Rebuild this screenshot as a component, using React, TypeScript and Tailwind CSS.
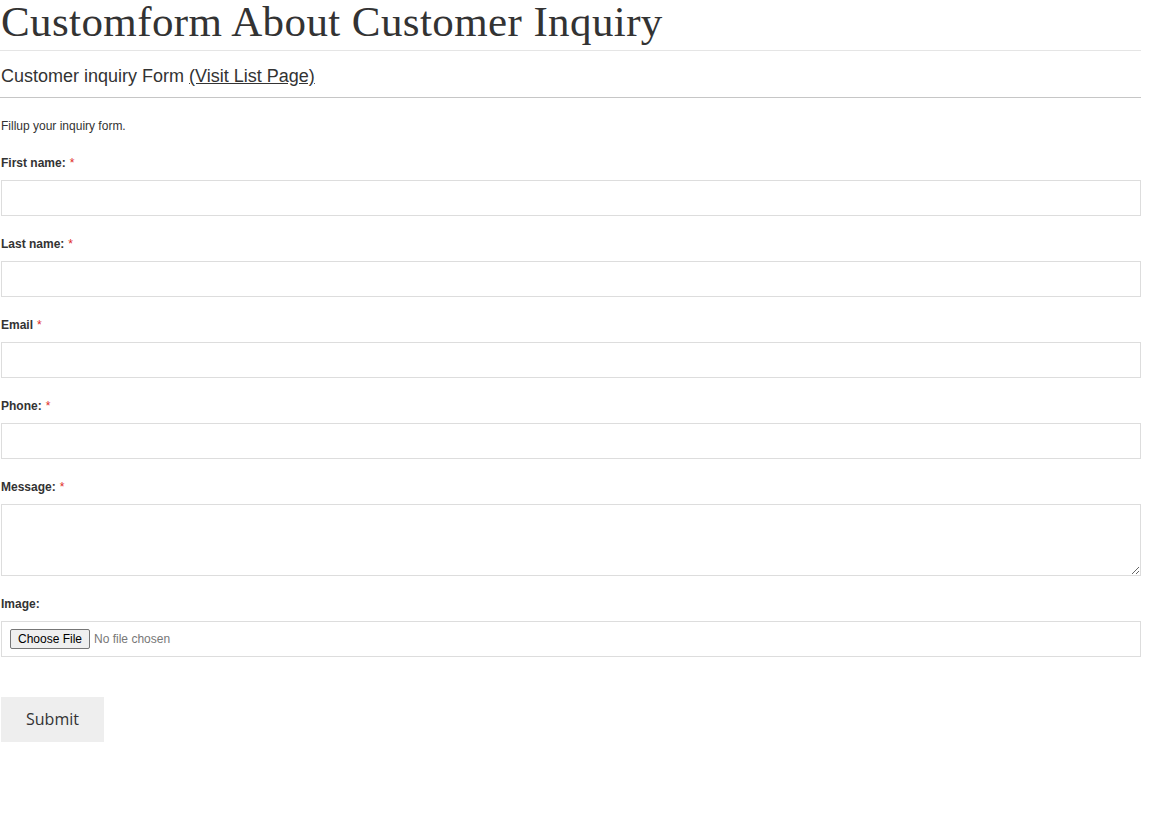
import React from 'react';

const Field: React.FC<{ label: string; required?: boolean; children: React.ReactNode }> = ({ label, required, children }) => (
  <div className="flex flex-col">
    <label className="h-[18px] text-[12px] leading-[18px] font-bold text-[#333]">
      {label}
      {required && <span className="ml-1 text-[#e02b27] font-normal">*</span>}
    </label>
    <div className="mt-[8px]">{children}</div>
  </div>
);

const inputCls = 'block w-full h-[36px] border border-[#dddddd] bg-white px-2 text-[14px] outline-none';

export default function App() {
  return (
    <div className="w-[1141px] bg-white text-[#333] font-['Liberation_Sans',Arial,sans-serif]">
      <h1 className="pl-px h-[51px] text-[43px] leading-[44px] font-normal font-['Liberation_Serif',Georgia,serif] text-[#333] border-b border-[#e5e5e5] tracking-[0.4px]">
        Customform About Customer Inquiry
      </h1>
      <div className="pl-px h-[47px] pt-[13px] text-[18px] leading-[24px] border-b border-[#c6c6c6]">
        Customer inquiry Form{' '}
        <a href="#" className="underline text-[#333]">(Visit List Page)</a>
      </div>
      <div className="pl-px pt-[19px]">
        <p className="text-[12px] leading-[18px]">Fillup your inquiry form.</p>
        <div className="mt-[19px] flex flex-col gap-[19px]">
          <Field label="First name:" required><input className={inputCls} /></Field>
          <Field label="Last name:" required><input className={inputCls} /></Field>
          <Field label="Email" required><input className={inputCls} /></Field>
          <Field label="Phone:" required><input className={inputCls} /></Field>
          <Field label="Message:" required>
            <textarea className="block w-full h-[72px] border border-[#dddddd] bg-white px-2 text-[14px] outline-none" />
          </Field>
          <Field label="Image:">
            <div className="h-[36px] border border-[#dddddd] flex items-center pl-[8px]">
              <input
                type="file"
                className="text-[12px] text-[#777] font-['Liberation_Sans',Arial,sans-serif] file:h-[20px] file:border file:border-[#767676] file:bg-[#efefef] file:rounded-[2px] file:px-[7px] file:mr-[4px] file:text-black file:text-[12px]"
              />
            </div>
          </Field>
        </div>
        <button className="mt-[40px] w-[103px] h-[45px] bg-[#eeeeee] text-[16px] text-[#333] font-['Open_Sans',sans-serif] pb-px">
          Submit
        </button>
      </div>
    </div>
  );
}
